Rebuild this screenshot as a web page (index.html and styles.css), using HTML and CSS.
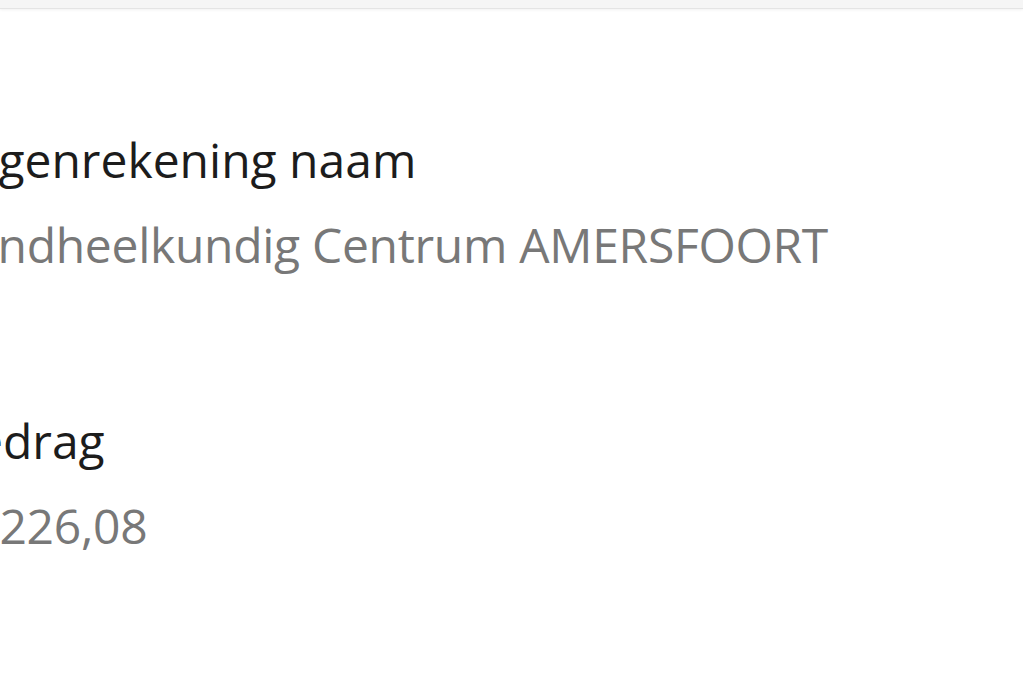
FILE: index.html
```html
<!DOCTYPE html>
<html lang="nl">
<head>
    <meta charset="UTF-8">
    <meta name="viewport" content="width=device-width, initial-scale=1.0">
    <title>Transactie</title>
    <link rel="stylesheet" href="styles.css">
</head>
<body>
    <div class="topbar"></div>
    <div class="details">
        <div class="field">
            <div class="label">Tegenrekening naam</div>
            <div class="value">Tandheelkundig Centrum AMERSFOORT</div>
        </div>
        <div class="field">
            <div class="label">Bedrag</div>
            <div class="value">-€ 226,08</div>
        </div>
    </div>
</body>
</html>
```

FILE: styles.css
```css
* {
    margin: 0;
    padding: 0;
    box-sizing: border-box;
}
body {
    width: 1023px;
    height: 683px;
    overflow: hidden;
    background: #fff;
    font-family: "Open Sans", "Liberation Sans", sans-serif;
}
.topbar {
    height: 9px;
    background: #f5f5f5;
    border-bottom: 1px solid #e4e4e4;
    box-shadow: 0 1px 3px rgba(0, 0, 0, 0.06);
}
.details {
    margin-left: -55px;
    padding-top: 121px;
    display: flex;
    flex-direction: column;
    gap: 136px;
}
.field {
    display: flex;
    flex-direction: column;
    gap: 25px;
    white-space: nowrap;
}
.label {
    font-size: 48px;
    line-height: 60px;
    color: #1c1c1c;
}
.value {
    font-size: 48px;
    line-height: 60px;
    letter-spacing: -0.3px;
    color: #787878;
}
```
